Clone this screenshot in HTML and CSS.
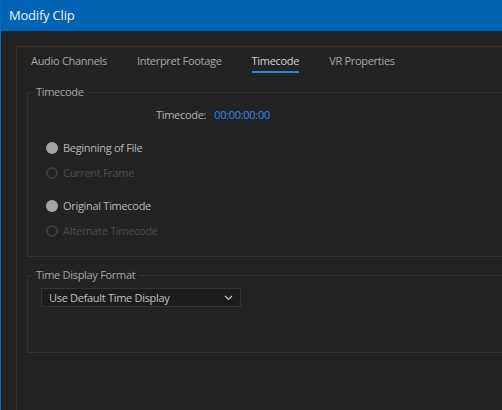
FILE: index.html
```html
<!DOCTYPE html>
<html>
<head>
<meta charset="utf-8">
<link rel="stylesheet" href="styles.css">
</head>
<body>
<div class="window">
  <div class="titlebar">Modify Clip</div>
  <div class="body">
    <div class="panel">
      <div class="tabs">
        <span class="tab">Audio Channels</span>
        <span class="tab">Interpret Footage</span>
        <span class="tab active">Timecode</span>
        <span class="tab">VR Properties</span>
      </div>
      <fieldset class="group group-tc">
        <legend>Timecode</legend>
        <div class="tc-row"><span class="tc-label">Timecode:</span><span class="tc-value">00:00:00:00</span></div>
        <div class="radios">
          <div class="radio on"><span class="dot"></span>Beginning of File</div>
          <div class="radio off"><span class="dot"></span>Current Frame</div>
        </div>
        <div class="radios second">
          <div class="radio on"><span class="dot"></span>Original Timecode</div>
          <div class="radio off"><span class="dot"></span>Alternate Timecode</div>
        </div>
      </fieldset>
      <fieldset class="group group-fmt">
        <legend>Time Display Format</legend>
        <div class="select">
          <span>Use Default Time Display</span>
          <svg class="chev" width="9" height="6" viewBox="0 0 9 6"><path d="M1 1 L4.5 4.5 L8 1" fill="none" stroke="#c8c8c8" stroke-width="1.2"/></svg>
        </div>
      </fieldset>
    </div>
  </div>
</div>
</body>
</html>
```
FILE: styles.css
```css
html, body {
  margin: 0;
  padding: 0;
  background: #232323;
  overflow: hidden;
  width: 502px;
  height: 410px;
}
.window {
  font-family: "Open Sans", "Liberation Sans", sans-serif;
  height: 410px;
  border-left: 1px solid #1565b4;
  box-sizing: border-box;
  display: flex;
  flex-direction: column;
}
.titlebar {
  height: 31px;
  flex: none;
  background: #0263b3;
  color: #eef2f7;
  font-size: 13px;
  line-height: 31px;
  padding-left: 8px;
  letter-spacing: -0.2px;
}
.body {
  flex: 1;
  display: flex;
  padding: 15px 0 0 15px;
  min-height: 0;
}
.panel {
  flex: 1;
  border-top: 1px solid #343434;
  border-left: 1px solid #343434;
  padding: 0 0 0 10px;
}
.tabs {
  display: flex;
  gap: 30px;
  padding: 6px 0 0 4px;
  height: 30px;
  box-sizing: border-box;
}
.tab {
  font-size: 11px;
  color: #a9a9a9;
  line-height: 16px;
  height: 18px;
  letter-spacing: -0.3px;
}
.tab.active {
  color: #d4d4d4;
  border-bottom: 2px solid #2c84df;
}
.group {
  border: 1px solid #343434;
  border-right: none;
  margin: 0;
  padding: 0;
  min-width: 0;
}
.group legend {
  font-size: 11px;
  color: #a6a6a6;
  padding: 0 4px;
  margin-left: 4px;
  line-height: 14px;
  letter-spacing: -0.3px;
}
.group-tc {
  margin-top: 8px;
  height: 172px;
  box-sizing: border-box;
}
.tc-row {
  display: flex;
  gap: 8px;
  padding: 8px 0 0 128px;
  font-size: 11px;
  line-height: 16px;
  letter-spacing: -0.3px;
}
.tc-label { color: #b4b4b4; }
.tc-value { color: #2f8ce6; }
.radios {
  padding: 17px 0 0 18px;
  display: flex;
  flex-direction: column;
  gap: 9px;
}
.radios.second { padding-top: 17px; }
.radio {
  display: flex;
  align-items: center;
  gap: 5px;
  font-size: 11px;
  line-height: 16px;
  color: #b8b8b8;
  letter-spacing: -0.3px;
}
.radio .dot {
  width: 12px;
  height: 12px;
  border-radius: 50%;
  box-sizing: border-box;
}
.radio.on .dot { background: #a4a4a4; }
.radio.off { color: #4e4e4e; }
.radio.off .dot { border: 2px solid #3c3c3c; }
.group-fmt {
  margin-top: 11px;
  height: 85px;
  box-sizing: border-box;
}
.select {
  margin: 6px 0 0 13px;
  width: 200px;
  height: 19px;
  box-sizing: border-box;
  background: #1c1c1c;
  border: 1px solid #333;
  display: flex;
  align-items: center;
  justify-content: space-between;
  padding: 0 7px 0 7px;
  font-size: 11px;
  color: #c2c2c2;
  letter-spacing: -0.3px;
}
.chev { margin-top: 1px; }
```
